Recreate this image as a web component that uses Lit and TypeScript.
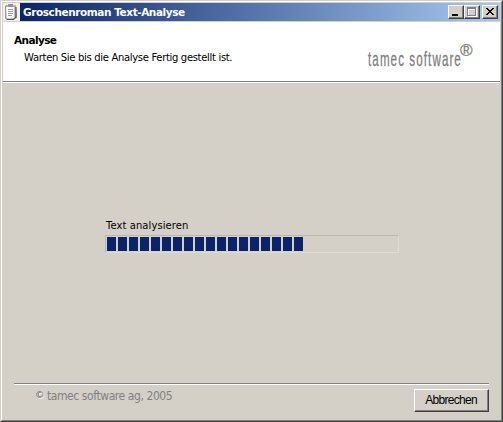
import { LitElement, html, css } from "lit";
import { customElement, property } from "lit/decorators.js";

@customElement("title-bar")
class TitleBar extends LitElement {
  static styles = css`
    :host { display: flex; height: 18px; box-sizing: border-box; flex: none; }
    .icon { width: 17px; height: 18px; background: #f3f1ed; flex: none; display: block; }
    .bar { flex: 1; display: flex; align-items: center; padding: 0 2px 0 3px;
      background: linear-gradient(to right, #0a246a, #a6caf0); }
    .text { flex: 1; color: #fff; font: bold 10.5px/18px "DejaVu Sans", Verdana, sans-serif; letter-spacing: -0.42px; white-space: nowrap; }
    .btn { width: 16px; height: 14px; box-sizing: border-box; background: #d4d0c8; border: 1px solid;
      border-color: #fff #404040 #404040 #fff; box-shadow: inset -1px -1px #808080; }
    .btn svg { display: block; width: 14px; height: 12px; }
    .close { margin-left: 2px; }
  `;
  @property() heading = "";
  render() {
    return html`
      <svg class="icon" viewBox="0 0 17 18">
        <path d="M3 3 L13 2 L14 15 L4 17 L2 15Z" fill="#8b8c91"/>
        <path d="M2.5 3H12V14.5L10 16H3Z" fill="#fafaf8" stroke="#8a8d98" stroke-width="1"/>
        <path d="M3 2H13V4H3Z" fill="#d0b36a"/>
        <path d="M5 1H10V4H5Z" fill="#8b90b4"/>
        <path d="M5 6.5H10M5 8.5H10M5 10.5H10M5 12.5H9" stroke="#9a9da2"/>
        <path d="M13 4V14L11 16.5H4" fill="none" stroke="#54565c"/>
      </svg>
      <div class="bar">
        <span class="text">${this.heading}</span>
        <span class="btn"><svg viewBox="0 0 14 12" shape-rendering="crispEdges"><path d="M3 8h6v2h-6z"/></svg></span>
        <span class="btn"><svg viewBox="0 0 14 12" shape-rendering="crispEdges">
          <path d="M3 2h9v9H3zM4 4v6h7V4z" fill="#fff" fill-rule="evenodd"/>
          <path d="M2 1h9v9H2zM3 3v6h7V3z" fill="#808080" fill-rule="evenodd"/></svg></span>
        <span class="btn close"><svg viewBox="0 0 14 12" shape-rendering="crispEdges">
          <path d="M3 2h2v1h1v1h2v-1h1v-1h2v1h-1v1h-1v1h-1v1h1v1h1v1h1v1h-2v-1h-1v-1h-2v1h-1v1h-2v-1h1v-1h1v-1h1v-1h-1v-1h-1v-1h-1z"/></svg></span>
      </div>`;
  }
}

@customElement("chunk-progress")
class ChunkProgress extends LitElement {
  static styles = css`
    :host { display: flex; gap: 2px; width: 294px; height: 18px; box-sizing: border-box; padding: 1px;
      border: 1px solid; border-color: #bbb7b0 #dedbd5 #dedbd5 #bbb7b0; }
    .chunk { width: 9px; height: 14px; background: #0a246a; }
  `;
  @property({ type: Number }) filled = 0;
  render() {
    return html`${Array.from({ length: this.filled }, () => html`<span class="chunk"></span>`)}`;
  }
}

@customElement("app-root")
class AppRoot extends LitElement {
  static styles = css`
    :host { display: block; width: 503px; height: 422px; box-sizing: border-box; background: #d4d0c8;
      border: 1px solid; border-color: #d4d0c8 #404040 #404040 #d4d0c8;
      font-family: "DejaVu Sans", Verdana, sans-serif; color: #000; overflow: hidden; }
    .frame { height: 100%; box-sizing: border-box; display: flex; flex-direction: column; padding: 1px;
      border: 1px solid; border-color: #fff #808080 #808080 #fff; }
    .head { height: 59px; margin-top: 1px; box-sizing: border-box; background: #fff; flex: none;
      display: flex; justify-content: space-between; padding: 11px 22px 0 11px; }
    .title { font-weight: bold; font-size: 10.5px; line-height: 14px; letter-spacing: -0.6px; }
    .sub { font-size: 10px; line-height: 14px; margin: 4px 0 0 10px; letter-spacing: -0.32px; white-space: nowrap; }
    .logo { display: block; width: 112px; height: 40px; margin-top: 3px; fill: #808080; overflow: visible; }
    .brand { font: 20px "Liberation Sans Narrow", "Liberation Sans", sans-serif; stroke: #808080; stroke-width: 0.3px; }
    .reg { font: 17px "Liberation Sans", Arial, sans-serif; stroke: #808080; stroke-width: 0.3px; }
    .rule { height: 1px; background: #808080; border-bottom: 1px solid #fff; flex: none; }
    .body { flex: 1; padding: 136px 0 0 102px; }
    .label { font-size: 10px; line-height: 14px; margin: 0 0 2px 1px; letter-spacing: 0.07px; }
    .foot { height: 36px; flex: none; padding: 0 11px; }
    .row { display: flex; justify-content: space-between; padding-top: 4px; }
    .copy { color: #808080; font: 12px/16px "DejaVu Sans Condensed", "DejaVu Sans", Tahoma, sans-serif;
      font-stretch: condensed; margin: -1px 0 0 21px; white-space: nowrap; letter-spacing: -0.42px; display: flex; }
    .mark { font-family: "DejaVu Sans", sans-serif; font-stretch: normal; font-size: 9.5px; line-height: 14px; width: 12px; color: #606060; text-shadow: 1px 1px #fff; }
    .cancel { width: 75px; height: 23px; box-sizing: border-box; background: #d4d0c8; border: 1px solid;
      border-color: #fff #404040 #404040 #fff; box-shadow: inset -1px -1px #808080; padding: 0 1px 2px 0;
      font: 12px/18px "Liberation Sans", Arial, sans-serif; letter-spacing: -0.7px; color: #000; }
  `;
  render() {
    return html`
      <div class="frame">
        <title-bar heading="Groschenroman Text-Analyse"></title-bar>
        <div class="head">
          <div>
            <div class="title">Analyse</div>
            <div class="sub">Warten Sie bis die Analyse Fertig gestellt ist.</div>
          </div>
          <svg class="logo" viewBox="0 0 112 40">
            <text class="brand" x="3.5" y="30" textLength="160" transform="scale(0.58 1)">tamec software</text>
            <text class="reg" x="94" y="20">®</text>
          </svg>
        </div>
        <div class="rule"></div>
        <div class="body">
          <div class="label">Text analysieren</div>
          <chunk-progress filled="18"></chunk-progress>
        </div>
        <div class="foot">
          <div class="rule"></div>
          <div class="row">
            <div class="copy"><span class="mark">©</span><span>tamec software ag, 2005</span></div>
            <button class="cancel">Abbrechen</button>
          </div>
        </div>
      </div>`;
  }
}
